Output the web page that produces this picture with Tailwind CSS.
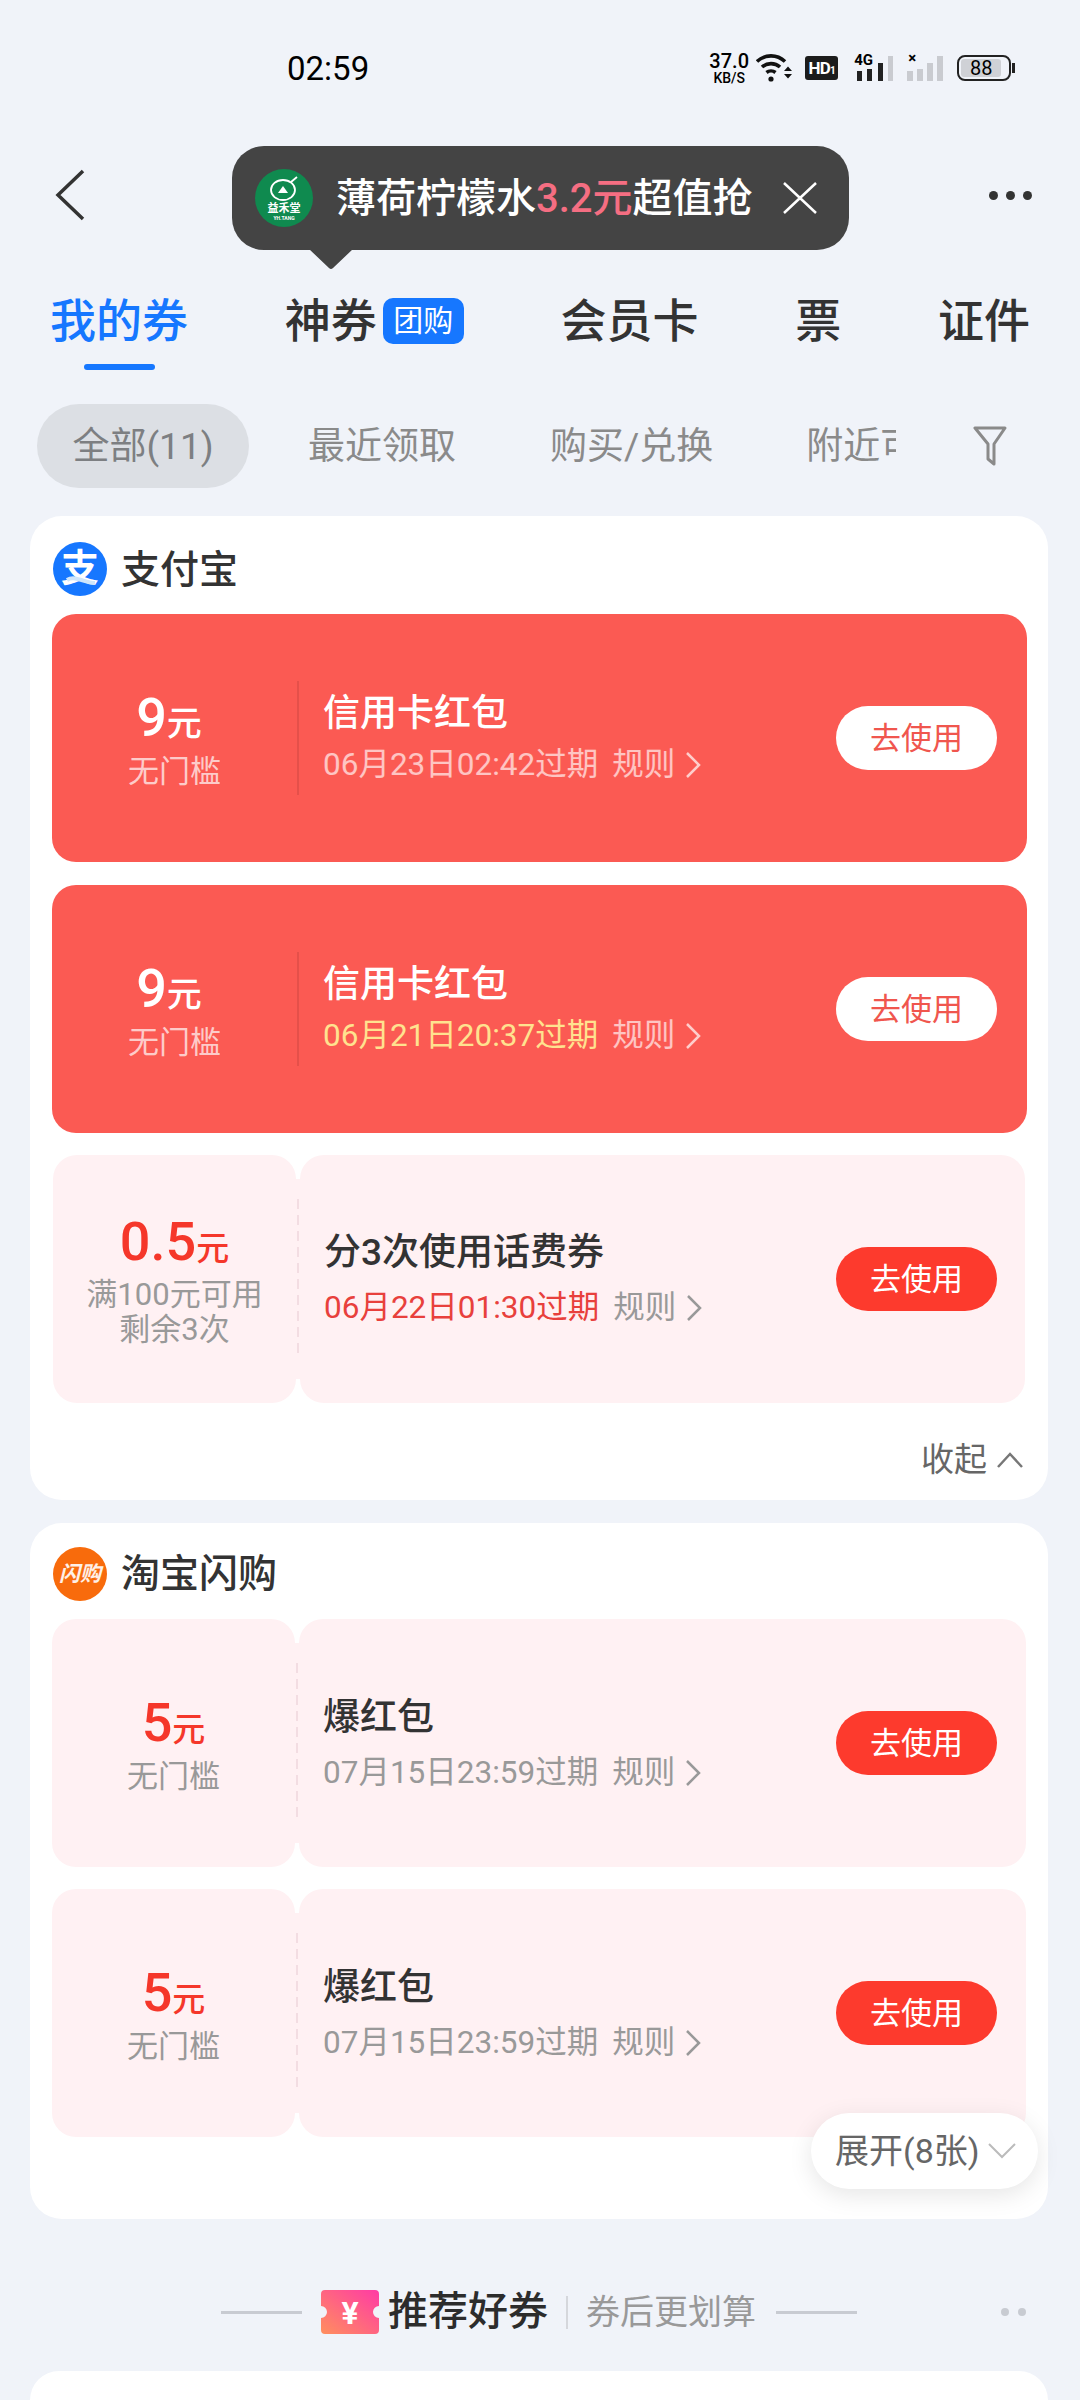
<!DOCTYPE html>
<html lang="zh-CN">

<head>
    <meta charset="UTF-8" />
    <meta name="viewport" content="width=device-width, initial-scale=1.0" />
    <title>我的券</title>
    <script src="https://cdn.jsdelivr.net/npm/@tailwindcss/browser@4"></script>
</head>

<body class="bg-[#f0f3f9]">
    <div class="relative w-[1080px] h-[2400px] overflow-hidden flex flex-col bg-[#f0f3f9] text-[#333333] font-['Roboto','Noto_Sans_CJK_SC',sans-serif]">

        <!-- status bar -->
        <div class="h-[136px] shrink-0 flex items-center text-black">
            <span class="ml-[287px] text-[33px] leading-none">02:59</span>
            <div class="ml-[340px] w-[40px] flex flex-col items-center font-medium leading-none">
                <span class="text-[20px] h-[20px]">37.0</span>
                <span class="text-[14px] h-[14px]">KB/S</span>
            </div>
            <svg class="ml-[7px]" width="36" height="30" viewBox="0 0 36 30" fill="none" stroke="#111" stroke-width="3.6">
                <path d="M1 8.500C9 1 21 1 29 8.500" />
                <path d="M6 14C11 9.500 19 9.500 24 14" />
                <path d="M10.500 19.500C13 17.500 17 17.500 19.500 19.500" />
                <circle cx="15" cy="26" r="2.600" fill="#111" stroke="none" />
                <path d="M28 18h8l-4-4.500zM28 21h8l-4 4.500z" fill="#111" stroke="none" />
            </svg>
            <div class="ml-[13px] w-[33px] h-[24px] rounded-[3px] bg-[#1c1c1c] text-white text-[17px] font-bold leading-[24px] text-center tracking-tighter">HD<span class="text-[10px]">1</span></div>
            <div class="relative ml-[16px] w-[40px] h-[28px]">
                <span class="absolute left-0 -top-[1px] text-[15px] font-bold leading-none">4G</span>
                <svg class="absolute left-0 top-0" width="40" height="28" viewBox="0 0 40 28">
                    <rect x="3" y="17" width="5" height="10" fill="#222" />
                    <rect x="13" y="15" width="5" height="12" fill="#222" />
                    <rect x="24" y="9" width="5" height="18" fill="#222" />
                    <rect x="34" y="2" width="5" height="25" fill="#c9cbd0" />
                </svg>
            </div>
            <div class="relative ml-[13px] w-[37px] h-[28px]">
                <span class="absolute left-[1px] -top-[3px] text-[15px] font-bold leading-none">×</span>
                <svg class="absolute left-0 top-0" width="37" height="28" viewBox="0 0 37 28">
                    <rect x="0" y="17" width="6" height="10" fill="#c9cbd0" />
                    <rect x="10" y="15" width="6" height="12" fill="#c9cbd0" />
                    <rect x="20" y="9" width="6" height="18" fill="#c9cbd0" />
                    <rect x="30" y="2" width="6" height="25" fill="#c9cbd0" />
                </svg>
            </div>
            <div class="ml-[13px] w-[54px] h-[26px] rounded-[8px] border-2 border-[#222] p-[2px] pr-[8px]">
                <div class="h-full rounded-[3px] bg-[#cfd1d6] text-[20px] leading-[18px] text-center">88</div>
            </div>
            <div class="ml-[1px] w-[3px] h-[10px] bg-[#222]"></div>
        </div>

        <!-- nav -->
        <div class="h-[118px] shrink-0 flex items-center justify-between pl-[55px] pr-[48px]">
            <svg width="30" height="52" viewBox="0 0 30 52" fill="none" stroke="#333" stroke-width="3.500">
                <path d="M28 2L3 26l25 24" />
            </svg>
            <div class="flex gap-[8px]">
                <div class="w-[9px] h-[9px] rounded-full bg-[#333]"></div>
                <div class="w-[9px] h-[9px] rounded-full bg-[#333]"></div>
                <div class="w-[9px] h-[9px] rounded-full bg-[#333]"></div>
            </div>
        </div>

        <!-- tabs -->
        <div class="relative h-[120px] shrink-0 flex items-start justify-between pl-[50px] pr-[50px] pt-[41px] text-[46px] leading-[52px] font-medium">
            <div class="flex flex-col items-center text-[#1677ff]">
                <span>我的券</span>
                <div class="mt-[17px] w-[71px] h-[6px] rounded-full bg-[#1677ff]"></div>
            </div>
            <div class="flex items-center gap-[6px]">
                <span>神券</span>
                <span class="w-[81px] h-[46px] rounded-[10px] bg-[#1677ff] text-white text-[30px] leading-[46px] text-center font-normal">团购</span>
            </div>
            <span>会员卡</span>
            <span>票</span>
            <span>证件</span>
        </div>

        <!-- filter chips -->
        <div class="mt-[30px] h-[84px] shrink-0 flex items-center pl-[37px] text-[37px] leading-[48px] text-[#8a8a8a]">
            <div class="w-[212px] h-[84px] pt-[2px] rounded-full bg-[#dcdfe4] flex items-center justify-center text-[#7d7f82]">全部(11)</div>
            <span class="ml-[59px] pt-[2px]">最近领取</span>
            <span class="ml-[94px] pt-[2px]">购买/兑换</span>
            <div class="ml-[93px] pt-[2px] w-[90px] overflow-hidden whitespace-nowrap">附近可用</div>
            <svg class="ml-[77px]" width="34" height="40" viewBox="0 0 34 40" fill="none" stroke="#8a8a8a" stroke-width="3">
                <path d="M2 2h30L21 18v20l-6-5V18z" stroke-linejoin="round" />
            </svg>
        </div>

        <!-- alipay -->
        <div class="mt-[28px] ml-[30px] w-[1018px] h-[984px] shrink-0 rounded-[32px] bg-white">
            <div class="h-[98px] flex items-center pl-[23px] pt-[7px] gap-[14px]">
                <div class="relative w-[54px] h-[54px] rounded-full bg-[#1677ff] text-white text-[38px] font-bold leading-[52px] text-center overflow-hidden">支
                    <svg class="absolute left-0 top-0" width="54" height="54" viewBox="0 0 54 54" fill="none" stroke="#cfe6fb" stroke-width="4">
                        <path d="M14 38c8-5 18 3 28 3" />
                    </svg>
                </div>
                <span class="pt-[3px] text-[39px] font-medium">支付宝</span>
            </div>

            <div class="ml-[22px] w-[975px] h-[248px] rounded-[24px] bg-[#fb5a53] flex items-center text-white">
                <div class="w-[245px] pt-[6px] flex flex-col items-center">
                    <div class="h-[52px] leading-[52px] mr-[11px]"><span class="text-[54px] font-medium">9</span><span class="text-[35px] font-medium">元</span></div>
                    <span class="mt-[9px] text-[31px] leading-[38px] text-white/70">无门槛</span>
                </div>
                <div class="w-[2px] h-[114px] bg-[#e5504a]"></div>
                <div class="flex-1 pl-[24px]">
                    <div class="text-[37px] leading-[48px] font-medium">信用卡红包</div>
                    <div class="mt-[6px] flex items-center text-[31.500px] leading-[42px] text-white/65">
                        <span>06月23日02:42过期</span>
                        <span class="ml-[14px]">规则</span>
                        <svg class="ml-[9px]" width="18" height="30" viewBox="0 0 18 30" fill="none" stroke="#fff" stroke-opacity=".7" stroke-width="2.500"><path d="M3 3l12 12L3 27" /></svg>
                    </div>
                </div>
                <div class="mr-[30px] w-[161px] h-[64px] rounded-full bg-white text-[#f0564e] text-[31px] leading-[66px] text-center">去使用</div>
            </div>

            <div class="mt-[23px] ml-[22px] w-[975px] h-[248px] rounded-[24px] bg-[#fb5a53] flex items-center text-white">
                <div class="w-[245px] pt-[6px] flex flex-col items-center">
                    <div class="h-[52px] leading-[52px] mr-[11px]"><span class="text-[54px] font-medium">9</span><span class="text-[35px] font-medium">元</span></div>
                    <span class="mt-[9px] text-[31px] leading-[38px] text-white/70">无门槛</span>
                </div>
                <div class="w-[2px] h-[114px] bg-[#e5504a]"></div>
                <div class="flex-1 pl-[24px]">
                    <div class="text-[37px] leading-[48px] font-medium">信用卡红包</div>
                    <div class="mt-[6px] flex items-center text-[31.500px] leading-[42px] text-white/65">
                        <span class="text-[#ffe28f]">06月21日20:37过期</span>
                        <span class="ml-[14px]">规则</span>
                        <svg class="ml-[9px]" width="18" height="30" viewBox="0 0 18 30" fill="none" stroke="#fff" stroke-opacity=".7" stroke-width="2.500"><path d="M3 3l12 12L3 27" /></svg>
                    </div>
                </div>
                <div class="mr-[30px] w-[161px] h-[64px] rounded-full bg-white text-[#f0564e] text-[31px] leading-[66px] text-center">去使用</div>
            </div>

            <div class="mt-[22px] ml-[23px] w-[972px] h-[248px] flex">
                <div class="w-[243px] pt-[4px] rounded-[24px] bg-[#fff1f3] flex flex-col items-center justify-center">
                    <div class="h-[52px] leading-[52px] text-[#f5372a]"><span class="text-[54px] font-medium">0.5</span><span class="text-[33px] font-medium">元</span></div>
                    <span class="mt-[9px] text-[31px] leading-[35px] text-[#999999]">满100元可用</span>
                    <span class="text-[31px] leading-[35px] text-[#999999]">剩余3次</span>
                </div>
                <div class="my-[24px] w-[4px] bg-[#fff1f3] flex items-center justify-center">
                    <div class="w-[2px] h-[160px] bg-[repeating-linear-gradient(to_bottom,#f3dde2_0,#f3dde2_10px,transparent_10px,transparent_16px)]"></div>
                </div>
                <div class="flex-1 rounded-[24px] bg-[#fff1f3] flex items-center">
                    <div class="flex-1 pl-[24px]">
                        <div class="text-[37px] leading-[48px] font-medium">分3次使用话费券</div>
                        <div class="mt-[10px] flex items-center text-[31.500px] leading-[42px] text-[#999999]">
                            <span class="text-[#e8403c]">06月22日01:30过期</span>
                            <span class="ml-[14px]">规则</span>
                            <svg class="ml-[9px]" width="18" height="30" viewBox="0 0 18 30" fill="none" stroke="#999" stroke-width="2.500"><path d="M3 3l12 12L3 27" /></svg>
                        </div>
                    </div>
                    <div class="mr-[28px] w-[161px] h-[64px] rounded-full bg-[#fd3a2d] text-white text-[31px] leading-[66px] text-center">去使用</div>
                </div>
            </div>

            <div class="mt-[35px] flex items-center justify-end pr-[24px] text-[33px] leading-[44px] text-[#666666]">
                <span>收起</span>
                <svg class="ml-[9px]" width="28" height="18" viewBox="0 0 28 18" fill="none" stroke="#777" stroke-width="2.500"><path d="M2 16L14 3l12 13" /></svg>
            </div>
        </div>

        <!-- taobao shangou -->
        <div class="mt-[23px] ml-[30px] w-[1018px] h-[696px] shrink-0 rounded-[32px] bg-white">
            <div class="h-[96px] flex items-center pl-[23px] pt-[5px] gap-[14px]">
                <div class="w-[54px] h-[54px] rounded-full bg-[#f86b0c] text-white/90 text-[21px] font-bold italic leading-[54px] text-center">闪购</div>
                <span class="pt-[2px] text-[39px] font-medium">淘宝闪购</span>
            </div>

            <div class="ml-[22px] w-[974px] h-[248px] flex">
                <div class="w-[243px] pt-[6px] rounded-[24px] bg-[#fff1f3] flex flex-col items-center justify-center">
                    <div class="h-[52px] leading-[52px] text-[#f5372a]"><span class="text-[54px] font-medium">5</span><span class="text-[33px] font-medium">元</span></div>
                    <span class="mt-[9px] text-[31px] leading-[38px] text-[#999999]">无门槛</span>
                </div>
                <div class="my-[24px] w-[4px] bg-[#fff1f3] flex items-center justify-center">
                    <div class="w-[2px] h-[160px] bg-[repeating-linear-gradient(to_bottom,#f3dde2_0,#f3dde2_10px,transparent_10px,transparent_16px)]"></div>
                </div>
                <div class="flex-1 pt-[2px] rounded-[24px] bg-[#fff1f3] flex items-center">
                    <div class="flex-1 pl-[24px]">
                        <div class="text-[37px] leading-[48px] font-medium">爆红包</div>
                        <div class="mt-[10px] flex items-center text-[31.500px] leading-[42px] text-[#999999]">
                            <span>07月15日23:59过期</span>
                            <span class="ml-[14px]">规则</span>
                            <svg class="ml-[9px]" width="18" height="30" viewBox="0 0 18 30" fill="none" stroke="#999" stroke-width="2.500"><path d="M3 3l12 12L3 27" /></svg>
                        </div>
                    </div>
                    <div class="mr-[29px] -mt-[2px] w-[161px] h-[64px] rounded-full bg-[#fd3a2d] text-white text-[31px] leading-[66px] text-center">去使用</div>
                </div>
            </div>

            <div class="mt-[22px] ml-[22px] w-[974px] h-[248px] flex">
                <div class="w-[243px] pt-[6px] rounded-[24px] bg-[#fff1f3] flex flex-col items-center justify-center">
                    <div class="h-[52px] leading-[52px] text-[#f5372a]"><span class="text-[54px] font-medium">5</span><span class="text-[33px] font-medium">元</span></div>
                    <span class="mt-[9px] text-[31px] leading-[38px] text-[#999999]">无门槛</span>
                </div>
                <div class="my-[24px] w-[4px] bg-[#fff1f3] flex items-center justify-center">
                    <div class="w-[2px] h-[160px] bg-[repeating-linear-gradient(to_bottom,#f3dde2_0,#f3dde2_10px,transparent_10px,transparent_16px)]"></div>
                </div>
                <div class="flex-1 pt-[2px] rounded-[24px] bg-[#fff1f3] flex items-center">
                    <div class="flex-1 pl-[24px]">
                        <div class="text-[37px] leading-[48px] font-medium">爆红包</div>
                        <div class="mt-[10px] flex items-center text-[31.500px] leading-[42px] text-[#999999]">
                            <span>07月15日23:59过期</span>
                            <span class="ml-[14px]">规则</span>
                            <svg class="ml-[9px]" width="18" height="30" viewBox="0 0 18 30" fill="none" stroke="#999" stroke-width="2.500"><path d="M3 3l12 12L3 27" /></svg>
                        </div>
                    </div>
                    <div class="mr-[29px] -mt-[2px] w-[161px] h-[64px] rounded-full bg-[#fd3a2d] text-white text-[31px] leading-[66px] text-center">去使用</div>
                </div>
            </div>
        </div>

        <!-- recommended heading -->
        <div class="relative h-[152px] shrink-0 flex items-center pl-[221px] pt-[34px]">
            <div class="w-[81px] h-[3px] bg-[#c8cbd2]"></div>
            <svg class="ml-[19px]" width="58" height="44" viewBox="0 0 58 44">
                <defs>
                    <linearGradient id="ticket" x1="0" y1="1" x2="1" y2="0">
                        <stop offset="0" stop-color="#ff8f5e" />
                        <stop offset="1" stop-color="#ff3aa5" />
                    </linearGradient>
                </defs>
                <path d="M4 0h50a4 4 0 0 1 4 4v12a6 6 0 0 0 0 12v12a4 4 0 0 1-4 4H4a4 4 0 0 1-4-4V28a6 6 0 0 0 0-12V4a4 4 0 0 1 4-4z" fill="url(#ticket)" />
                <text x="29" y="34" text-anchor="middle" fill="#fff" font-size="32" font-weight="700" font-family="Roboto, sans-serif">¥</text>
            </svg>
            <span class="ml-[9px] text-[40px] font-medium text-[#2c2c2c]">推荐好券</span>
            <div class="ml-[18px] w-[2px] h-[33px] bg-[#d5d7dc]"></div>
            <span class="ml-[18px] text-[34px] text-[#999999]">券后更划算</span>
            <div class="ml-[20px] w-[81px] h-[3px] bg-[#c8cbd2]"></div>
            <div class="ml-[144px] w-[8px] h-[8px] rounded-full bg-[#c8cbd2]"></div>
            <div class="ml-[9px] w-[8px] h-[8px] rounded-full bg-[#c8cbd2]"></div>
        </div>

        <!-- next card, cut off by the screen -->
        <div class="ml-[30px] w-[1018px] flex-1 rounded-t-[32px] bg-white"></div>

        <!-- tooltip over the nav -->
        <div class="absolute left-[232px] top-[146px] w-[617px] h-[104px] rounded-[32px] bg-[#444444] flex items-center pl-[23px] text-white">
            <div class="relative w-[58px] h-[58px] rounded-full bg-[#0f8a4f] flex flex-col items-center overflow-hidden">
                <svg class="mt-[7px]" width="30" height="26" viewBox="0 0 30 26" fill="none" stroke="#fff" stroke-width="1.800">
                    <ellipse cx="14" cy="14" rx="12" ry="10" />
                    <path d="M9 17l5-7 5 7z" fill="#fff" stroke="none" />
                    <path d="M22 6l6-5" />
                </svg>
                <span class="text-[11px] leading-[13px] font-bold whitespace-nowrap">益禾堂</span>
                <span class="text-[5px] leading-[6px] font-bold whitespace-nowrap">YH.TANG</span>
            </div>
            <span class="ml-[23px] pt-[2px] text-[40px] leading-none font-medium whitespace-nowrap">薄荷柠檬水<span class="text-[#f56e82]">3.2元</span>超值抢</span>
            <svg class="ml-[29px]" width="36" height="34" viewBox="0 0 36 34" fill="none" stroke="#fff" stroke-width="2.500">
                <path d="M2 2l32 30M34 2L2 32" />
            </svg>
        </div>
        <svg class="absolute left-[309px] top-[249px]" width="44" height="21" viewBox="0 0 44 21">
            <path d="M0 0h44L24 19q-2 2-4 0z" fill="#444444" />
        </svg>

        <!-- expand pill over the second card -->
        <div class="absolute left-[811px] top-[2113px] w-[227px] h-[76px] rounded-full bg-white shadow-[0_6px_24px_rgba(0,0,0,0.10)] flex items-center pl-[24px] text-[34px] text-[#666666]">
            <span>展开(8张)</span>
            <svg class="ml-[8px]" width="28" height="16" viewBox="0 0 28 16" fill="none" stroke="#bbbbbb" stroke-width="2"><path d="M1 1l13 13L27 1" /></svg>
        </div>
    </div>
</body>

</html>
